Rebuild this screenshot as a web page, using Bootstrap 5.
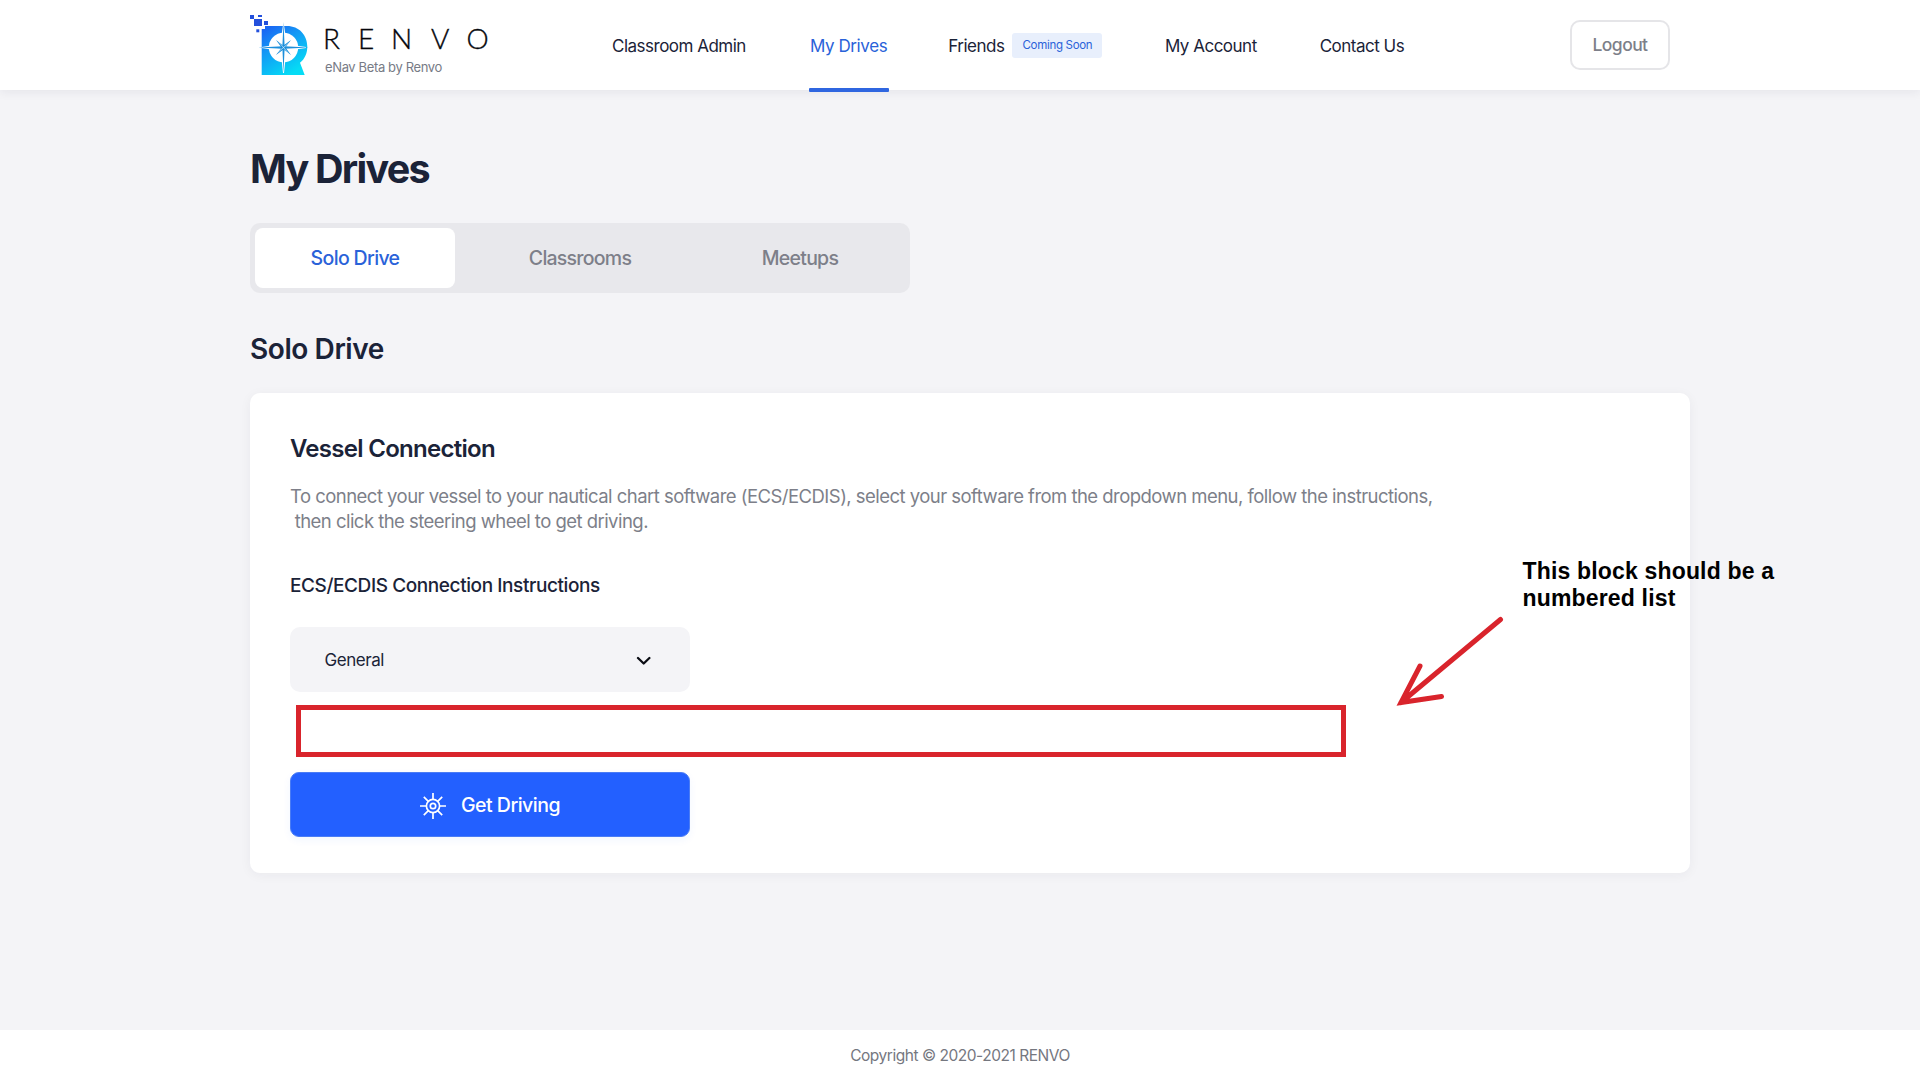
<!DOCTYPE html>
<html lang="en">
<head>
<meta charset="utf-8">
<meta name="viewport" content="width=device-width, initial-scale=1">
<title>My Drives - RENVO</title>
<link href="https://cdn.jsdelivr.net/npm/bootstrap@5.3.0/dist/css/bootstrap.min.css" rel="stylesheet">
<style>
  body { font-family: Inter, "Noto Sans", sans-serif; background: #f4f4f7; color: #1b2338; min-height: 1080px; overflow: hidden; }
  .site-header { height: 90px; padding: 0 250px; box-shadow: 0 2px 10px rgba(30, 35, 55, .07); }
  .brand-block { width: 362px; padding-top: 14px; height: 90px; }
  .brand-text { margin-left: 15px; }
  .brand-word { font-family: Lato, sans-serif; font-weight: 300; font-size: 28px; line-height: 34px; color: #05060c; margin: 7px 0 0 -2px; height: 34px; -webkit-text-stroke: .35px #05060c; }
  .brand-word span { flex: none; }
  .brand-sub { font-size: 13px; line-height: 16px; letter-spacing: -.37px; color: #777b86; margin-top: 4px; white-space: nowrap; }
  .main-nav .nav-link { padding: 2px 0 0; line-height: 89px; height: 91px; font-size: 17px; letter-spacing: -.5px; color: #1b2338; white-space: nowrap; position: relative; }
  .main-nav .nav-link.active { color: #2a62d9; letter-spacing: -.4px; }
  .main-nav .nav-link.active::after { content: ""; position: absolute; left: -1px; width: 80px; top: 88px; height: 4px; background: #2f66e0; border-radius: 1px; }
  .soon-tag { width: 90px; height: 25px; line-height: 25px; border-radius: 3px; background: #e8effc; color: #2a62d9; font-size: 11.5px; letter-spacing: -.3px; text-align: center; margin: -2px 0 0 8px; }
  .btn-logout { width: 100px; height: 50px; border: 2px solid #e5e5e8; border-radius: 10px; color: #7d7f89; font-size: 17.5px; font-weight: 500; letter-spacing: -.55px; background: #fff; padding: 0; }
  .page-body { padding: 55px 230px 0 250px; }
  .page-title { font-size: 39.5px; line-height: 49px; font-weight: 700; letter-spacing: -1.75px; margin: 0 0 -1px; }
  .drive-tabs { width: 660px; height: 70px; padding: 5px; background: #e8e8ec; border-radius: 10px; margin-top: 30px; }
  .drive-tabs .nav-link { height: 60px; line-height: 60px; padding: 0; border-radius: 8px; text-align: center; color: #7d7f89; font-size: 19.5px; font-weight: 500; letter-spacing: -.75px; }
  .drive-tabs .nav-link.active { background: #fff; color: #2a62d9; letter-spacing: -.65px; }
  .section-title { font-size: 28px; line-height: 34px; font-weight: 600; letter-spacing: -.42px; margin: 39px 0 27px; }
  .vessel-card { border: 0; border-radius: 10px; height: 480px; padding: 42px 40px 0; color: inherit; box-shadow: 0 2px 12px rgba(30, 35, 55, .05); }
  .card-heading { font-size: 24px; line-height: 28px; font-weight: 600; letter-spacing: -.71px; margin: 0 0 21px; }
  .intro-text { font-size: 18.5px; line-height: 25px; letter-spacing: -.532px; color: #7d7f89; margin: 0; white-space: nowrap; }
  .field-label { font-size: 19px; line-height: 24px; font-weight: 500; letter-spacing: -.41px; margin: 40px 0 29px; }
  .chart-select { width: 400px; height: 65px; border: 0; border-radius: 10px; background: #f4f4f7; color: #1b2338; font-size: 17px; letter-spacing: -.45px; padding: 2px 39px 0 34.5px; }
  .marked-box { width: 1050px; height: 52px; border: 5px solid #d9242c; margin: 13px 0 15px 6px; }
  .btn-drive, .btn-drive:hover { width: 400px; height: 65px; border: 1px solid #4a7cf5; border-radius: 9px; background: #2360ff; color: #fff; font-size: 19.5px; font-weight: 500; letter-spacing: -.5px; padding: 2px 0 0; box-shadow: 0 3px 8px rgba(35, 96, 255, .06); }
  .wheel-icon { margin-right: 15px; }
  .note-text { position: absolute; left: 1272.500px; top: 165px; font: 700 23px/27px "Liberation Sans", Arial, sans-serif; letter-spacing: .17px; color: #000; white-space: nowrap; }
  .note-arrow { position: absolute; left: 1146px; top: 221px; }
  .site-footer { position: fixed; bottom: 0; height: 50px; line-height: 52px; font-size: 15.5px; letter-spacing: -.47px; color: #75777f; }
</style>
</head>
<body class="d-flex flex-column">
<header class="site-header bg-white d-flex">
  <a class="brand-block d-flex flex-shrink-0 text-decoration-none" href="#" aria-label="Renvo">
    <svg class="flex-shrink-0" width="60" height="64" viewBox="250 14 60 64">
      <defs>
        <linearGradient id="hull" x1="0" y1="0" x2=".6" y2="1">
          <stop offset="0" stop-color="#1c5cf3"/><stop offset=".45" stop-color="#139af5"/><stop offset="1" stop-color="#05dcf5"/>
        </linearGradient>
      </defs>
      <g fill="#2450dc">
        <rect x="250" y="15" width="4" height="4"/><rect x="258" y="15" width="4" height="2"/>
        <rect x="254" y="19" width="8" height="7"/><rect x="264" y="21" width="4" height="4"/><rect x="256.300" y="29.300" width="3" height="3"/>
      </g>
      <path fill="url(#hull)" d="M261.700 29h3.300v-3h22c12 0 20.300 9 20.300 20.500 0 7-2.600 12.500-7.300 16.300l4.700 12.200h-43z"/>
      <circle cx="283.500" cy="47.500" r="14.700" fill="#fff"/>
      <path fill="#fff" d="M283 25h1l1.300 9h-3.600zM281.700 61h3.600l-1.300 12h-1zM261.700 47l8-1.200v3.400l-8-1.200zM297 45.800l9 1.200v1l-9 1.200z"/>
      <g fill="#1c8fdb">
        <path d="M283.500 22l1.100 24h-2.200zM283.500 73l1.100-25h-2.200zM258 47.500l25-1.200v2.400zM309 47.500l-25-1.200v2.400z"/>
        <path d="M276 40l7.500 5.500L291 40l-5.500 7.500L291 55l-7.500-5.500L276 55l5.500-7.500z"/>
      </g>
      <path stroke="#fff" stroke-width=".6" d="M283.500 47.500l-5-6M283.500 47.500l6-5M283.500 47.500l5 6M283.500 47.500l-6 5"/>
    </svg>
    <div class="brand-text">
      <div class="brand-word d-flex">
        <span style="width:35px">R</span><span style="width:33px">E</span><span style="width:40px">N</span><span style="width:35.500px">V</span><span>O</span>
      </div>
      <div class="brand-sub">eNav Beta by Renvo</div>
    </div>
  </a>
  <nav class="main-nav nav flex-nowrap">
    <a class="nav-link" href="#">Classroom Admin</a>
    <a class="nav-link active" href="#" style="margin-left:64px">My Drives</a>
    <a class="nav-link d-flex align-items-center" href="#" style="margin-left:61px">Friends<span class="soon-tag d-inline-block">Coming Soon</span></a>
    <a class="nav-link" href="#" style="margin-left:62.500px">My Account</a>
    <a class="nav-link" href="#" style="margin-left:63px">Contact Us</a>
  </nav>
  <button class="btn btn-logout ms-auto mt-auto mb-auto" type="button">Logout</button>
</header>

<main class="page-body">
  <h1 class="page-title">My Drives</h1>
  <nav class="drive-tabs nav flex-nowrap">
    <a class="nav-link active" href="#" style="width:200px">Solo Drive</a>
    <a class="nav-link" href="#" style="width:250px">Classrooms</a>
    <a class="nav-link" href="#" style="width:190px">Meetups</a>
  </nav>
  <h2 class="section-title">Solo Drive</h2>

  <section class="card vessel-card">
    <h3 class="card-heading">Vessel Connection</h3>
    <p class="intro-text">To connect your vessel to your nautical chart software (ECS/ECDIS), select your software from the dropdown menu, follow the instructions,<br>&nbsp;then click the steering wheel to get driving.</p>
    <h4 class="field-label">ECS/ECDIS Connection Instructions</h4>
    <button class="chart-select d-flex align-items-center justify-content-between" type="button">
      General
      <svg width="15" height="10" viewBox="0 0 15 10" fill="none" stroke="#0b0d14" stroke-width="2.300" stroke-linecap="round" stroke-linejoin="round"><path d="M2 2l5.700 5.500L13.400 2"/></svg>
    </button>
    <div class="marked-box"></div>
    <button class="btn btn-drive d-flex align-items-center justify-content-center" type="button">
      <svg class="wheel-icon" width="26" height="26" viewBox="0 0 26 26" fill="none" stroke="#fff" stroke-width="1.700">
        <circle cx="13" cy="13" r="6.600"/><circle cx="13" cy="13" r="2.700"/>
        <path d="M13 0v6.400M13 19.600V26M0 13h6.400M19.600 13H26M3.800 3.800l4.500 4.500M17.700 17.700l4.500 4.500M22.200 3.800l-4.500 4.500M8.300 17.700l-4.500 4.500"/>
      </svg>
      Get Driving
    </button>
    <div class="note-text">This block should be a<br>numbered list</div>
    <svg class="note-arrow" width="112" height="92" fill="none" stroke="#d9242c" stroke-width="5" stroke-linecap="round"><path d="M104.500 5.500L5 88.500M24 52L5 88.500L45.500 82.500"/></svg>
  </section>
</main>

<footer class="site-footer w-100 bg-white text-center">Copyright © 2020-2021 RENVO</footer>
<script src="https://cdn.jsdelivr.net/npm/bootstrap@5.3.0/dist/js/bootstrap.bundle.min.js"></script>
</body>
</html>
